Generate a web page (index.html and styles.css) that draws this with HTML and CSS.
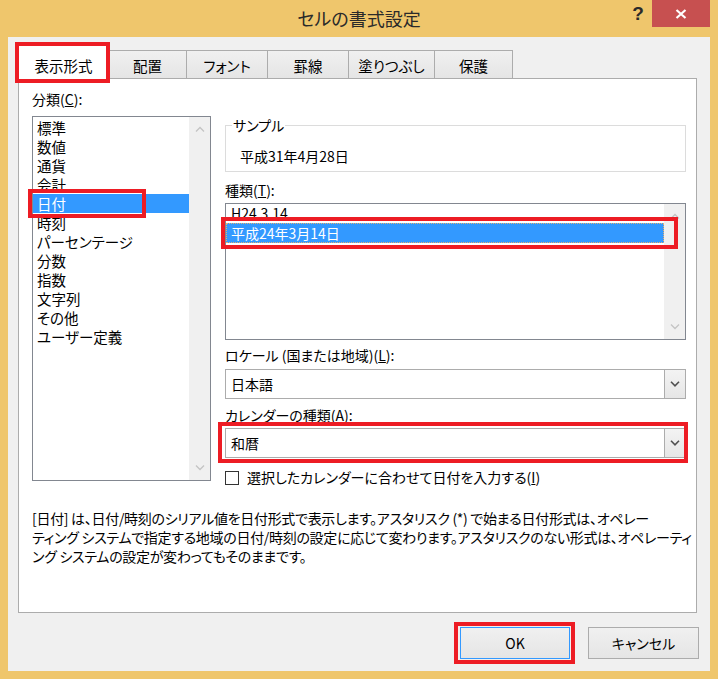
FILE: index.html
```html
<!DOCTYPE html>
<html lang="ja">
<head>
<meta charset="utf-8">
<title>セルの書式設定</title>
<link rel="stylesheet" href="styles.css">
</head>
<body>
<div class="window">
  <div class="titlebar">
    <div class="title">セルの書式設定</div>
    <div class="controls">
      <div class="help">?</div>
      <div class="close">
        <svg width="12" height="10" viewBox="0 0 12 10"><path d="M1.5 1 L10.5 9 M10.5 1 L1.5 9" stroke="#fff" stroke-width="2.2" fill="none"/></svg>
      </div>
    </div>
  </div>
  <div class="client">
    <div class="tabs">
      <div class="tab active w-hyoji">表示形式<span class="mark mark-tab"></span></div>
      <div class="tab w-haichi">配置</div>
      <div class="tab w-font">フォント</div>
      <div class="tab w-keisen">罫線</div>
      <div class="tab w-nuri">塗りつぶし</div>
      <div class="tab w-hogo">保護</div>
    </div>
    <div class="panel">
      <div class="cols">
        <div class="left">
          <div class="label">分類(<u>C</u>):</div>
          <div class="list catlist">
            <div class="items">
              <div class="item">標準</div>
              <div class="item">数値</div>
              <div class="item">通貨</div>
              <div class="item">会計</div>
              <div class="item sel">日付<span class="mark mark-cat"></span></div>
              <div class="item">時刻</div>
              <div class="item">パーセンテージ</div>
              <div class="item">分数</div>
              <div class="item">指数</div>
              <div class="item">文字列</div>
              <div class="item">その他</div>
              <div class="item">ユーザー定義</div>
            </div>
            <div class="vscroll">
              <svg width="10" height="6" viewBox="0 0 10 6"><polyline points="1,5.5 5,1.5 9,5.5" fill="none" stroke="#c4c4c4" stroke-width="1.3"/></svg>
              <svg width="10" height="6" viewBox="0 0 10 6"><polyline points="1,0.5 5,4.5 9,0.5" fill="none" stroke="#c4c4c4" stroke-width="1.3"/></svg>
            </div>
          </div>
        </div>
        <div class="right">
          <fieldset class="sample">
            <legend>サンプル</legend>
            <div class="sample-val">平成31年4月28日</div>
          </fieldset>
          <div class="label label-type">種類(<u>T</u>):</div>
          <div class="list typelist">
            <div class="items items-type">
              <div class="titem">H24.3.14</div>
              <div class="titem sel">平成24年3月14日<span class="mark mark-type"></span></div>
            </div>
            <div class="vscroll">
              <svg width="10" height="6" viewBox="0 0 10 6"><polyline points="1,5.5 5,1.5 9,5.5" fill="none" stroke="#c4c4c4" stroke-width="1.3"/></svg>
              <svg width="10" height="6" viewBox="0 0 10 6"><polyline points="1,0.5 5,4.5 9,0.5" fill="none" stroke="#c4c4c4" stroke-width="1.3"/></svg>
            </div>
          </div>
          <div class="label label-locale">ロケール (国または地域)(<u>L</u>):</div>
          <div class="select select-locale">
            <div class="val">日本語</div>
            <div class="drop"><svg width="10" height="6" viewBox="0 0 10 6"><polyline points="1,0.8 5,4.8 9,0.8" fill="none" stroke="#505050" stroke-width="1.6"/></svg></div>
          </div>
          <div class="label label-cal">カレンダーの種類(A):</div>
          <div class="select select-cal">
            <div class="val">和暦</div>
            <div class="drop"><svg width="10" height="6" viewBox="0 0 10 6"><polyline points="1,0.8 5,4.8 9,0.8" fill="none" stroke="#505050" stroke-width="1.6"/></svg></div>
            <span class="mark mark-cal"></span>
          </div>
          <div class="check">
            <span class="box"></span>
            <span>選択したカレンダーに合わせて日付を入力する(<u>I</u>)</span>
          </div>
        </div>
      </div>
      <p class="desc">[日付] は、日付/時刻のシリアル値を日付形式で表示します。アスタリスク (*) で始まる日付形式は、オペレー<br>ティング システムで指定する地域の日付/時刻の設定に応じて変わります。アスタリスクのない形式は、オペレーティ<br>ング システムの設定が変わってもそのままです。</p>
    </div>
    <div class="buttons">
      <div class="btn ok">OK<span class="mark mark-ok"></span></div>
      <div class="btn cancel">キャンセル</div>
    </div>
  </div>
</div>
</body>
</html>
```

FILE: styles.css
```css
* { box-sizing: border-box; }
html, body { margin: 0; padding: 0; }
body {
  width: 718px;
  height: 679px;
  overflow: hidden;
  font-family: "Noto Sans CJK JP", "Noto Sans", sans-serif;
  font-size: 14px;
  color: #000;
  font-feature-settings: "palt";
}
.window {
  width: 718px;
  height: 679px;
  background: #efc66c;
  display: flex;
  flex-direction: column;
}
.titlebar {
  height: 37px;
  flex: none;
  display: grid;
}
.title, .controls { grid-area: 1 / 1; }
.title {
  justify-self: center;
  font-size: 18px;
  line-height: 37px;
  color: #2a2a2a;
}
.controls {
  justify-self: end;
  align-self: start;
  display: flex;
  margin-right: 8px;
}
.help {
  width: 18px;
  height: 27px;
  margin-right: 5px;
  font: bold 19px/28px "Liberation Sans", sans-serif;
  text-align: center;
  color: #2a2a2a;
}
.close {
  width: 58px;
  height: 27px;
  background: #c75050;
  display: flex;
  align-items: center;
  justify-content: center;
}
.client {
  flex: 1;
  margin: 0 8px 8px;
  background: #f0f0f0;
  display: flex;
  flex-direction: column;
}
.tabs {
  display: flex;
  align-items: flex-end;
  margin: 7px 0 0 10px;
  position: relative;
  z-index: 1;
}
.tab {
  height: 28px;
  border: 1px solid #acacac;
  border-bottom: none;
  margin-left: -1px;
  background: linear-gradient(#f0f0f0, #e5e5e5);
  display: flex;
  justify-content: center;
  align-items: center;
  padding-top: 2px;
  line-height: 19px;
  font-size: 14.5px;
  white-space: nowrap;
}
.tab.active {
  height: 35px;
  margin-left: 0;
  margin-bottom: -1px;
  background: #fff;
  position: relative;
  z-index: 2;
  padding-top: 6px;
}
.w-hyoji { width: 91px; }
.w-haichi { width: 79px; }
.w-font { width: 82px; }
.w-keisen { width: 82px; }
.w-nuri { width: 87px; }
.w-hogo { width: 79px; }

.mark {
  position: absolute;
  border: 4px solid #ed1c24;
  z-index: 5;
}
.mark-tab { left: -4px; top: -3px; right: -2px; bottom: -4px; }
.mark-cat { left: -5px; top: -5px; width: 118px; height: 29px; }
.mark-type { left: -6px; top: -7px; right: -15px; bottom: -7px; }
.mark-cal { left: -8px; top: -7px; right: -3px; bottom: -6px; }
.mark-ok { left: -7px; top: -6px; right: -6px; bottom: -6px; }

.panel {
  height: 535px;
  flex: none;
  margin: 0 13px 0 10px;
  border: 1px solid #acacac;
  background: #fff;
  padding: 11px 10px 0 13px;
}
.cols {
  display: flex;
  gap: 14px;
}
.left { width: 179px; }
.right { width: 461px; padding-top: 26px; }
.label {
  line-height: 19px;
  white-space: nowrap;
}
.list {
  border: 1px solid #828790;
  display: flex;
  background: #fff;
}
.catlist { height: 365px; margin-top: 7px; }
.items { flex: 1; padding-top: 1px; }
.item {
  line-height: 19px;
  padding-left: 4px;
  white-space: nowrap;
  font-size: 14.5px;
}
.item.sel {
  background: #3399ff;
  color: #fff;
  position: relative;
}
.vscroll {
  width: 21px;
  background: #f0f0f0;
  display: flex;
  flex-direction: column;
  justify-content: space-between;
  align-items: center;
  padding: 9px 0;
}
.vscroll svg { display: block; }

.sample {
  margin: 0;
  padding: 12px 0 5px 14px;
  border: 1px solid #dcdcdc;
  min-inline-size: 0;
}
.sample legend {
  padding: 0 1px;
  margin-left: -8px;
  line-height: 19px;
}
.sample-val { line-height: 19px; }
.label-type { margin-top: 9px; }
.typelist { height: 137px; margin-top: 3px; }
.items-type { padding-top: 0; }
.titem {
  line-height: 19px;
  padding-left: 5px;
  white-space: nowrap;
}
.titem.sel {
  background: #3399ff;
  color: #fff;
  line-height: 18px;
  border: 1px dotted #e8b070;
  padding-left: 4px;
  position: relative;
}
.label-locale { margin-top: 6px; }
.select {
  height: 30px;
  border: 1px solid #acacac;
  display: flex;
  background: #fff;
  position: relative;
}
.select-locale { margin-top: 4px; }
.label-cal { margin-top: 7px; }
.select-cal { margin-top: 3px; }
.select .val {
  flex: 1;
  padding-left: 5px;
  line-height: 28px;
}
.select .drop {
  width: 21px;
  border-left: 1px solid #acacac;
  background: linear-gradient(#f3f3f3, #e6e6e6);
  display: flex;
  align-items: center;
  justify-content: center;
}
.check {
  display: flex;
  align-items: center;
  margin-top: 10px;
  line-height: 19px;
  white-space: nowrap;
}
.box {
  width: 14px;
  height: 14px;
  border: 1px solid #333;
  background: #fff;
  margin-right: 8px;
  flex: none;
}
.desc {
  margin: 22px 0 0;
  line-height: 19px;
  white-space: nowrap;
  letter-spacing: -0.3px;
}
.buttons {
  display: flex;
  justify-content: flex-end;
  gap: 18px;
  margin: 14px 11px 0 0;
}
.btn {
  height: 32px;
  border: 1px solid #acacac;
  background: linear-gradient(#f0f0f0, #e5e5e5);
  display: flex;
  align-items: center;
  justify-content: center;
  position: relative;
}
.ok { width: 110px; border-color: #3399ff; }
.cancel { width: 111px; }
```
